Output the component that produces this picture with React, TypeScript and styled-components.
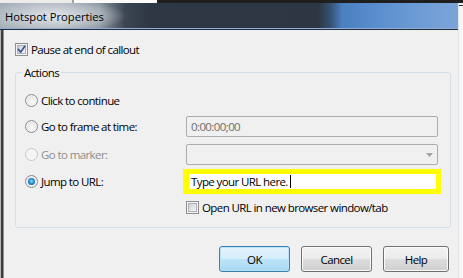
import React from "react";
import styled, { createGlobalStyle } from "styled-components";

const GlobalStyle = createGlobalStyle`
  html, body { margin: 0; padding: 0; }
  body { background: #f0f0f0; font-family: "Open Sans", "Noto Sans", sans-serif; }
`;

const Screen = styled.div`
  width: 463px;
  height: 278px;
  overflow: hidden;
  display: flex;
  flex-direction: column;
  background: #f4f4f4;
`;

const Backdrop = styled.div`
  height: 3px;
  flex-shrink: 0;
  display: flex;
`;

const BackdropLight = styled.div`
  width: 157px;
  background: linear-gradient(90deg, #ececec 0 72px, #a3a3a3 72px 74px, #fbfbfb 74px 100%);
`;

const BackdropDark = styled.div`
  flex: 1;
  background: #1f1f1f;
`;

const WindowArea = styled.div`
  flex: 1;
  display: flex;
  min-height: 0;
`;

const Dialog = styled.div`
  width: 458px;
  flex-shrink: 0;
  display: flex;
  flex-direction: column;
`;

const SideGap = styled.div`
  flex: 1;
  background: linear-gradient(#f2f2f2 0 2px, #2a2a2a 2px 3px, #f6f6f6 3px 100%);
  box-shadow: inset 1px 0 0 #e2e6ea;
`;

const TitleBar = styled.div`
  height: 26px;
  flex-shrink: 0;
  display: flex;
  align-items: center;
  padding-left: 5px;
  box-sizing: border-box;
  font-size: 11.2px;
  color: #000;
  background:
    radial-gradient(ellipse 72px 17px at 54px 13px, rgba(228, 232, 237, 0.95) 0%, rgba(208, 214, 220, 0.55) 60%, rgba(200, 206, 212, 0) 100%),
    linear-gradient(90deg, #a4adb6 0px, #aab2ba 60px, #8a939d 100px, #3c4653 125px, #2e3743 150px, #2d3642 318px, #34506f 330px, #4a7fc0 342px, #5c8fcf 380px, #6e9cd5 420px, #7aa5d9 458px);
  box-shadow: inset 0 -1px 0 #93aed0;
`;

const TitleRule = styled.div`
  height: 1px;
  flex-shrink: 0;
  background: #1f2e40;
`;

const Body = styled.div`
  flex: 1;
  display: flex;
  flex-direction: column;
  background: #f0f0f0;
  padding: 13px 7px 0 15px;
  box-shadow: inset 1px 0 0 #b4b4b4, inset 3px 0 0 #383e44, inset 4px 0 0 #8d9297;
  font-size: 11.5px;
  letter-spacing: -0.6px;
  color: #000;
`;

const CheckLine = styled.div`
  display: flex;
  align-items: center;
  gap: 3px;
  height: 13px;
  white-space: nowrap;
`;

const CheckBox = styled.span`
  position: relative;
  width: 13px;
  height: 13px;
  box-sizing: border-box;
  flex-shrink: 0;
  border: 1px solid #8e8f8f;
  padding: 1px;
  background: #f4f4f4;
  display: flex;
`;

const CheckInner = styled.span`
  flex: 1;
  border: 1px solid #aeb3b9;
  background: linear-gradient(135deg, #cbcfd5 0%, #e5e7ea 60%, #f6f6f6 100%);
`;

const CheckMark = styled.svg`
  position: absolute;
  left: -1px;
  top: -1px;
`;

const GroupBox = styled.fieldset`
  margin: 9px 0 0 0;
  padding: 0 0 13px 0;
  border: 1px solid #d5dfe5;
  border-radius: 3px;
  min-width: 0;
`;

const Legend = styled.legend`
  margin-left: 6px;
  padding: 0 2px;
  line-height: 15px;
`;

const Rows = styled.div`
  display: flex;
  flex-direction: column;
  padding: 10px 0 0 9px;
`;

const Row = styled.div<{ $h: number; $mt: number }>`
  display: grid;
  grid-template-columns: 161px 252px;
  align-items: center;
  height: ${(p) => p.$h}px;
  margin-top: ${(p) => p.$mt}px;
`;

const RadioLine = styled.div<{ $disabled?: boolean }>`
  display: flex;
  align-items: center;
  gap: 3px;
  white-space: nowrap;
  color: ${(p) => (p.$disabled ? "#8d8d8d" : "#000")};
`;

const Radio = styled.span<{ $checked?: boolean; $disabled?: boolean }>`
  width: 13px;
  height: 13px;
  box-sizing: border-box;
  flex-shrink: 0;
  border-radius: 50%;
  border: 1px solid ${(p) => (p.$disabled ? "#c4c4c4" : "#8a8c8e")};
  background: ${(p) =>
    p.$disabled
      ? "#f4f4f4"
      : "radial-gradient(circle at 60% 65%, #fbfbfb 0%, #ececec 45%, #cfd1d3 100%)"};
  box-shadow: inset 0 0 0 1px ${(p) => (p.$disabled ? "#f7f7f7" : "#f4f4f4")};
  display: flex;
  align-items: center;
  justify-content: center;

  &::after {
    content: "";
    display: ${(p) => (p.$checked ? "block" : "none")};
    width: 7px;
    height: 7px;
    border-radius: 50%;
    background: radial-gradient(circle at 50% 45%, #8fe0ff 0%, #2f97dc 40%, #12559f 85%, #0c3a72 100%);
  }
`;

const Field = styled.div`
  box-sizing: border-box;
  width: 252px;
  height: 21px;
  border: 1px solid #abadb3;
  border-radius: 2px;
  background: #f0f0f0;
  color: #6d6d6d;
  padding: 0 4px;
  display: flex;
  align-items: center;
  justify-content: space-between;
`;

const UrlField = styled.div`
  box-sizing: border-box;
  width: 258px;
  height: 25px;
  margin-left: -3px;
  border: 5px solid #ffff00;
  border-left-width: 6px;
  background: #fff;
  padding-left: 2px;
  display: flex;
  align-items: center;
  color: #000;
  white-space: nowrap;
`;

const Caret = styled.span`
  width: 1px;
  height: 13px;
  margin-left: 2px;
  background: #000;
`;

const ButtonRow = styled.div`
  display: flex;
  justify-content: flex-end;
  gap: 11px;
  margin-top: 18px;
  padding-right: 2px;
`;

const Button = styled.button<{ $default?: boolean; $w: number }>`
  box-sizing: border-box;
  width: ${(p) => p.$w}px;
  height: 26px;
  padding: 0;
  border-radius: 3px;
  font: inherit;
  letter-spacing: inherit;
  color: #000;
  border: 1px solid ${(p) => (p.$default ? "#3c7fb1" : "#707070")};
  background: ${(p) =>
    p.$default
      ? "linear-gradient(#e5f4fc 0%, #d4edfb 50%, #bde4f8 50%, #a9d8f2 100%)"
      : "linear-gradient(#f2f2f2 0%, #ebebeb 50%, #dddddd 50%, #cfcfcf 100%)"};
  box-shadow: inset 0 0 0 1px ${(p) => (p.$default ? "rgba(180, 226, 248, 0.9)" : "rgba(255, 255, 255, 0.85)")};
`;

const Check = () => (
  <CheckBox>
    <CheckInner />
  </CheckBox>
);

const CheckedBox = () => (
  <CheckBox>
    <CheckInner />
    <CheckMark width="13" height="13" viewBox="0 0 13 13">
      <path d="M3.4 6.4 L5.6 9.2 L9.8 3.3" fill="none" stroke="#3d5596" strokeWidth="1.7" strokeLinecap="round" strokeLinejoin="round" />
    </CheckMark>
  </CheckBox>
);

export default function App() {
  return (
    <>
      <GlobalStyle />
      <Screen>
        <Backdrop>
          <BackdropLight />
          <BackdropDark />
        </Backdrop>
        <WindowArea>
          <Dialog>
            <TitleBar>Hotspot Properties</TitleBar>
            <TitleRule />
            <Body>
              <CheckLine>
                <CheckedBox />
                <span>Pause at end of callout</span>
              </CheckLine>
              <GroupBox>
                <Legend>Actions</Legend>
                <Rows>
                  <Row $h={21} $mt={0}>
                    <RadioLine>
                      <Radio />
                      <span>Click to continue</span>
                    </RadioLine>
                  </Row>
                  <Row $h={21} $mt={5}>
                    <RadioLine>
                      <Radio />
                      <span>Go to frame at time:</span>
                    </RadioLine>
                    <Field>0:00:00;00</Field>
                  </Row>
                  <Row $h={21} $mt={7}>
                    <RadioLine $disabled>
                      <Radio $disabled />
                      <span>Go to marker:</span>
                    </RadioLine>
                    <Field>
                      <span />
                      <svg width="7" height="4" viewBox="0 0 7 4">
                        <path d="M0 0 H7 L3.5 4 Z" fill="#a3a3a3" />
                      </svg>
                    </Field>
                  </Row>
                  <Row $h={25} $mt={4}>
                    <RadioLine>
                      <Radio $checked />
                      <span>Jump to URL:</span>
                    </RadioLine>
                    <UrlField>
                      <span>Type your URL here.</span>
                      <Caret />
                    </UrlField>
                  </Row>
                  <Row $h={13} $mt={7}>
                    <span />
                    <CheckLine>
                      <Check />
                      <span>Open URL in new browser window/tab</span>
                    </CheckLine>
                  </Row>
                </Rows>
              </GroupBox>
              <ButtonRow>
                <Button $default $w={71}>OK</Button>
                <Button $w={71}>Cancel</Button>
                <Button $w={66}>Help</Button>
              </ButtonRow>
            </Body>
          </Dialog>
          <SideGap />
        </WindowArea>
      </Screen>
    </>
  );
}
